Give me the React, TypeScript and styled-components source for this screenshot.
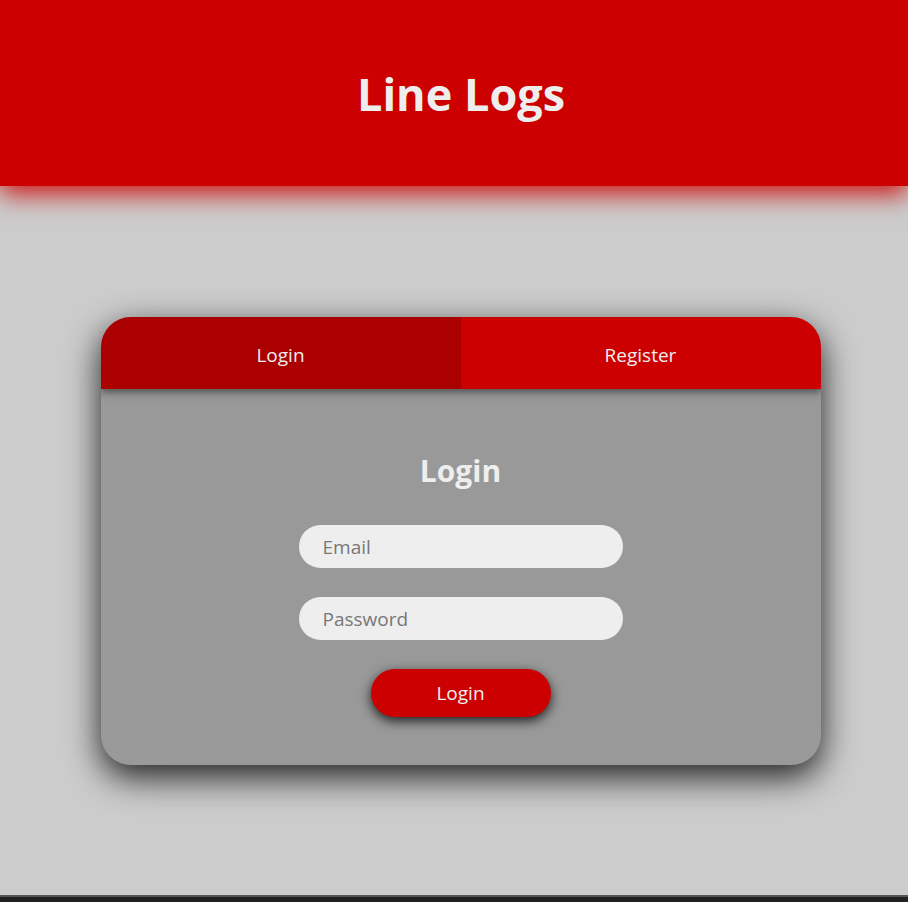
import styled, { createGlobalStyle } from 'styled-components';

const GlobalStyle = createGlobalStyle`
  * {
    box-sizing: border-box;
  }

  body {
    margin: 0;
    background-color: #cccccc;
    font-family: 'Open Sans', 'Noto Sans', sans-serif;
    color: #eeeeee;
  }
`;

const App = () => {
  return (
    <>
      <GlobalStyle />
      <Page>
        <Header>
          <h1>Line Logs</h1>
        </Header>

        <Main>
          <Card>
            <Tabs>
              <Tab type="button" $active>
                Login
              </Tab>
              <Tab type="button">Register</Tab>
            </Tabs>

            <Form onSubmit={(e) => e.preventDefault()}>
              <h2>Login</h2>
              <Input type="email" placeholder="Email" />
              <Input type="password" placeholder="Password" />
              <SubmitButton type="submit">Login</SubmitButton>
            </Form>
          </Card>
        </Main>

        <Footer />
      </Page>
    </>
  );
};

export default App;

const Page = styled.div`
  min-height: 100vh;
  display: flex;
  flex-direction: column;
`;

const Header = styled.header`
  height: 186px;
  background-color: #cc0000;
  box-shadow: 0 8px 24px rgba(204, 0, 0, 0.9);
  display: flex;
  justify-content: center;
  padding-top: 66px;
  padding-left: 14px;
  position: relative;
  z-index: 1;

  h1 {
    margin: 0;
    font-size: 45px;
    line-height: 56px;
    font-weight: 700;
    color: #eeeeee;
  }
`;

const Main = styled.main`
  flex: 1;
  display: flex;
  justify-content: center;
  padding-top: 131px;
  padding-left: 13px;
`;

const Card = styled.section`
  width: 720px;
  height: 448px;
  border-radius: 30px;
  background-color: #999999;
  overflow: hidden;
  box-shadow: 0 12px 34px rgba(0, 0, 0, 0.85);
  display: flex;
  flex-direction: column;
`;

const Tabs = styled.div`
  display: flex;
  height: 72px;
  box-shadow: 0 3px 8px rgba(0, 0, 0, 0.5);
  position: relative;
`;

const Tab = styled.button<{ $active?: boolean }>`
  flex: 1;
  border: none;
  margin: 0;
  padding: 3px 0 0;
  background-color: ${({ $active }) => ($active ? '#aa0000' : '#cc0000')};
  color: #eeeeee;
  font-family: inherit;
  font-size: 19px;
  cursor: pointer;
`;

const Form = styled.form`
  display: flex;
  flex-direction: column;
  align-items: center;
  padding-top: 62px;

  h2 {
    margin: 0 0 34px;
    font-size: 30px;
    line-height: 40px;
    font-weight: 700;
  }
`;

const Input = styled.input`
  width: 324px;
  height: 43px;
  border: none;
  border-radius: 22px;
  background-color: #eeeeee;
  padding: 0 24px;
  margin-bottom: 29px;
  font-family: inherit;
  font-size: 19px;
  color: #333;
  outline: none;

  &::placeholder {
    color: #777777;
  }
`;

const SubmitButton = styled.button`
  width: 180px;
  height: 48px;
  border: none;
  border-radius: 24px;
  background-color: #cc0000;
  color: #eeeeee;
  font-family: inherit;
  font-size: 19px;
  box-shadow: 0 4px 12px rgba(0, 0, 0, 0.8);
  cursor: pointer;
`;

const Footer = styled.footer`
  height: 7px;
  background-color: #222222;
  border-top: 2px solid #555555;
`;
